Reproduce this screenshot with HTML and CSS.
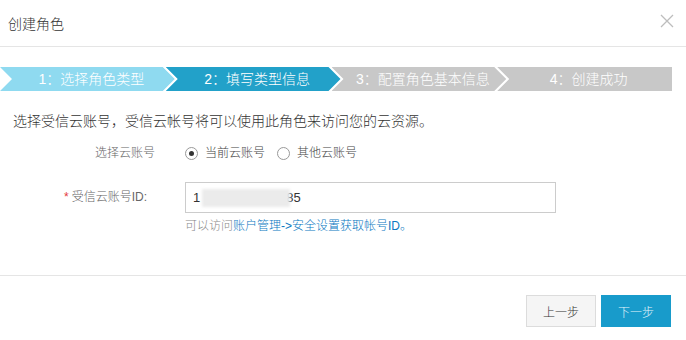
FILE: index.html
```html
<!DOCTYPE html>
<html lang="zh-CN">
<head>
  <meta charset="UTF-8">
  <meta name="viewport" content="width=device-width, initial-scale=1">
  <title>创建角色</title>
  <link rel="stylesheet" href="styles.css">
</head>
<body>

  <div class="dialog">
    <header class="dialog-head">
      <h1>创建角色</h1>
      <button class="close-btn" aria-label="关闭">
        <svg width="14" height="14" viewBox="0 0 14 14">
          <path d="M1 1 L13 13 M13 1 L1 13" stroke="#bdbdbd" stroke-width="1.3" fill="none"/>
        </svg>
      </button>
    </header>

    <main class="dialog-body">
      <ol class="steps">
        <li class="step done">1：选择角色类型</li>
        <li class="step active">2：填写类型信息</li>
        <li class="step">3：配置角色基本信息</li>
        <li class="step last">4：创建成功</li>
      </ol>

      <p class="desc">选择受信云账号，受信云帐号将可以使用此角色来访问您的云资源。</p>

      <div class="form-row">
        <div class="form-label">选择云账号</div>
        <div class="form-control radios">
          <label class="radio"><span class="radio-dot checked"></span>当前云账号</label>
          <label class="radio"><span class="radio-dot"></span>其他云账号</label>
        </div>
      </div>

      <div class="form-row row-id">
        <div class="form-label label-id"><span class="req">*</span>受信云账号ID:</div>
        <div class="form-control">
          <div class="text-input">1<span class="masked"></span>85</div>
          <div class="help">可以访问<a href="#">账户管理-&gt;安全设置获取帐号ID。</a></div>
        </div>
      </div>
    </main>

    <footer class="dialog-foot">
      <button class="btn">上一步</button>
      <button class="btn btn-primary">下一步</button>
    </footer>
  </div>

</body>
</html>
```

FILE: styles.css
```css
body {
  margin: 0;
  padding: 0;
  background-color: white;
  font-family: "Liberation Sans", "Noto Sans CJK SC", sans-serif;
  font-weight: 300;
  color: #333;
}

.dialog {
  width: 686px;
  height: 340px;
}

.dialog-head {
  display: flex;
  justify-content: space-between;
  align-items: center;
  height: 46px;
  padding: 0 12px 0 8px;
  border-bottom: 1px solid #e5e5e5;
}

.dialog-head h1 {
  margin: 0;
  font-size: 14px;
  font-weight: 300;
  color: #333;
}

.close-btn {
  background: none;
  border: none;
  padding: 0;
  margin-top: -5px;
  display: flex;
  cursor: pointer;
}

.dialog-body {
  padding: 20px 0 0 0;
  height: 208px;
}

.steps {
  display: flex;
  list-style: none;
  margin: 0;
  padding: 0;
  width: 672px;
}

.step {
  flex: 1;
  height: 24px;
  line-height: 24px;
  font-size: 14px;
  color: white;
  text-align: center;
  padding: 0 12px 0 20px;
  background-color: #c8c8c8;
  clip-path: polygon(0 0, calc(100% - 12px) 0, 100% 50%, calc(100% - 12px) 100%, 0 100%, 12px 50%);
}

.step + .step {
  margin-left: -9px;
}

.step.done {
  background-color: #8fdaf0;
}

.step.active {
  background-color: #22a1c9;
}

.step.last {
  clip-path: polygon(0 0, 100% 0, 100% 100%, 0 100%, 12px 50%);
}

.desc {
  margin: 20px 0 0 13px;
  font-size: 14px;
  line-height: 20px;
  color: #333;
}

.form-row {
  display: flex;
  margin-top: 12px;
  font-size: 12px;
}

.form-label {
  width: 155px;
  text-align: right;
  color: #666;
  line-height: 20px;
  margin-right: 30px;
}

.radios {
  display: flex;
  gap: 12px;
  line-height: 20px;
}

.radio {
  display: flex;
  align-items: center;
  color: #444;
}

.radio-dot {
  width: 11px;
  height: 11px;
  border: 1px solid #999;
  border-radius: 50%;
  margin-right: 7px;
  display: flex;
  align-items: center;
  justify-content: center;
}

.radio-dot.checked::after {
  content: "";
  width: 5px;
  height: 5px;
  border-radius: 50%;
  background-color: #333;
}

.row-id {
  margin-top: 19px;
}

.label-id {
  width: 147px;
  margin-right: 38px;
  line-height: 31px;
}

.req {
  color: #e4393c;
  margin-right: 3px;
}

.text-input {
  box-sizing: border-box;
  width: 371px;
  height: 31px;
  border: 1px solid #ccc;
  padding: 0 7px;
  font-size: 13px;
  line-height: 29px;
  color: #333;
  display: flex;
  align-items: center;
}

.masked {
  display: inline-block;
  width: 88px;
  height: 18px;
  margin: 0 -4px 0 2px;
  background-color: #ebebeb;
  filter: blur(1.5px);
  position: relative;
  z-index: 1;
}

.help {
  margin-top: 5px;
  line-height: 16px;
  color: #888;
}

.help a {
  color: #0a78c2;
  text-decoration: none;
}

.dialog-foot {
  display: flex;
  justify-content: flex-end;
  gap: 5px;
  border-top: 1px solid #e5e5e5;
  padding: 19px 15px 0 0;
}

.btn {
  width: 70px;
  height: 32px;
  font-size: 12px;
  font-family: inherit;
  font-weight: 300;
  border: 1px solid #dcdcdc;
  background-color: #f5f5f5;
  color: #333;
  cursor: pointer;
}

.btn-primary {
  background-color: #189bcb;
  border-color: #189bcb;
  color: #e6f5fb;
}
```
